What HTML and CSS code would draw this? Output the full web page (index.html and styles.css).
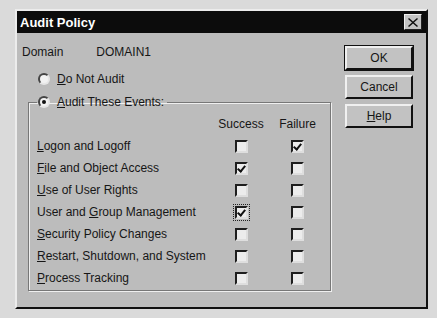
FILE: index.html
```html
<!DOCTYPE html>
<html lang="en">

<head>
    <meta charset="UTF-8">
    <title>Audit Policy</title>
    <link rel="stylesheet" href="styles.css">
</head>

<body>
    <div class="window">
        <div class="titlebar">
            <span>Audit Policy</span>
            <span class="close">
                <svg width="10" height="9" viewBox="0 0 10 9">
                    <path d="M1 0 L5 3.5 L9 0 L10 1 L6 4.5 L10 8 L9 9 L5 5.5 L1 9 L0 8 L4 4.5 L0 1 Z" fill="#111"/>
                </svg>
            </span>
        </div>
        <div class="content">
            <div class="left">
                <div class="domain">
                    <span>Domain</span>
                    <span class="domain-name">DOMAIN1</span>
                </div>
                <div class="radio-row">
                    <span class="radio"></span>
                    <span><u>D</u>o Not Audit</span>
                </div>
                <fieldset class="group">
                    <legend class="radio-row">
                        <span class="radio radio-on"></span>
                        <span><u>A</u>udit These Events:</span>
                    </legend>
                    <div class="grid">
                        <span></span>
                        <span class="head">Success</span>
                        <span class="head">Failure</span>

                        <span><u>L</u>ogon and Logoff</span>
                        <span class="cell"><span class="check"></span></span>
                        <span class="cell"><span class="check checked"></span></span>

                        <span><u>F</u>ile and Object Access</span>
                        <span class="cell"><span class="check checked"></span></span>
                        <span class="cell"><span class="check"></span></span>

                        <span><u>U</u>se of User Rights</span>
                        <span class="cell"><span class="check"></span></span>
                        <span class="cell"><span class="check"></span></span>

                        <span>User and <u>G</u>roup Management</span>
                        <span class="cell"><span class="check checked focus"></span></span>
                        <span class="cell"><span class="check"></span></span>

                        <span><u>S</u>ecurity Policy Changes</span>
                        <span class="cell"><span class="check"></span></span>
                        <span class="cell"><span class="check"></span></span>

                        <span><u>R</u>estart, Shutdown, and System</span>
                        <span class="cell"><span class="check"></span></span>
                        <span class="cell"><span class="check"></span></span>

                        <span><u>P</u>rocess Tracking</span>
                        <span class="cell"><span class="check"></span></span>
                        <span class="cell"><span class="check"></span></span>
                    </div>
                </fieldset>
            </div>
            <div class="buttons">
                <button class="btn btn-default">OK</button>
                <button class="btn">Cancel</button>
                <button class="btn"><u>H</u>elp</button>
            </div>
        </div>
    </div>
</body>

</html>
```

FILE: styles.css
```css
body {
    margin: 0;
    padding: 9px 0 0 15px;
    background-color: #dadada;
    font-family: "Liberation Sans", Arial, sans-serif;
    font-size: 12px;
    color: #161616;
}

.window {
    width: 413px;
    height: 300px;
    box-sizing: border-box;
    background-color: #bcbcbc;
    border: 2px solid;
    border-color: #ececec #101010 #101010 #ececec;
}

.titlebar {
    height: 22px;
    background-color: #0c0c0c;
    color: #fff;
    font-weight: bold;
    font-size: 13px;
    display: flex;
    align-items: center;
    justify-content: space-between;
    padding: 0 4px 0 3px;
}

.close {
    width: 18px;
    height: 16px;
    box-sizing: border-box;
    background-color: #c4c4c4;
    border: 1px solid;
    border-color: #f0f0f0 #222 #222 #f0f0f0;
    display: flex;
    align-items: center;
    justify-content: center;
}

.content {
    display: flex;
    justify-content: space-between;
}

.left {
    padding: 11px 0 0 0;
}

.domain {
    height: 16px;
    line-height: 16px;
    padding-left: 5px;
    display: flex;
}

.domain-name {
    margin-left: 33px;
}

.radio-row {
    display: flex;
    align-items: center;
    gap: 7px;
    height: 14px;
}

.left > .radio-row {
    margin: 12px 0 0 21px;
}

.radio {
    width: 12px;
    height: 12px;
    box-sizing: border-box;
    border-radius: 50%;
    background-color: #f2f2f2;
    border: 2px solid;
    border-color: #444 #e6e6e6 #e6e6e6 #444;
    position: relative;
}

.radio-on::after {
    content: "";
    position: absolute;
    left: 2px;
    top: 2px;
    width: 4px;
    height: 4px;
    border-radius: 50%;
    background-color: #111;
}

.group {
    margin: 8px 0 0 11px;
    padding: 0 0 0 8px;
    width: 303px;
    height: 197px;
    box-sizing: border-box;
    border: 1px solid #777;
    box-shadow: 1px 1px 0 #efefef, inset 1px 1px 0 #efefef;
}

.group legend {
    padding: 0 3px 0 1px;
    margin-left: 0;
    height: 16px;
}

.grid {
    display: grid;
    grid-template-columns: 178px 52px 61px;
    grid-auto-rows: 22px;
    align-items: center;
    margin-top: 3px;
}

.head {
    text-align: center;
}

.cell {
    display: flex;
    justify-content: center;
}

.check {
    width: 13px;
    height: 13px;
    box-sizing: border-box;
    background-color: #ececec;
    border: 2px solid;
    border-color: #1e1e1e #dedede #dedede #1e1e1e;
    position: relative;
}

.checked::after {
    content: "";
    position: absolute;
    left: 2px;
    top: 0px;
    width: 3px;
    height: 6px;
    border: solid #111;
    border-width: 0 2px 2px 0;
    transform: rotate(40deg);
}

.focus {
    outline: 1px dotted #222;
    outline-offset: 1px;
}

.buttons {
    display: flex;
    flex-direction: column;
    gap: 5px;
    padding: 13px 13px 0 0;
}

.btn {
    width: 68px;
    height: 24px;
    background-color: #c2c2c2;
    font-family: "Liberation Sans", Arial, sans-serif;
    font-size: 12px;
    color: #161616;
    border: 2px solid;
    border-color: #f0f0f0 #111 #111 #f0f0f0;
    padding: 0;
}

.btn-default {
    outline: 1px solid #111;
}
```
